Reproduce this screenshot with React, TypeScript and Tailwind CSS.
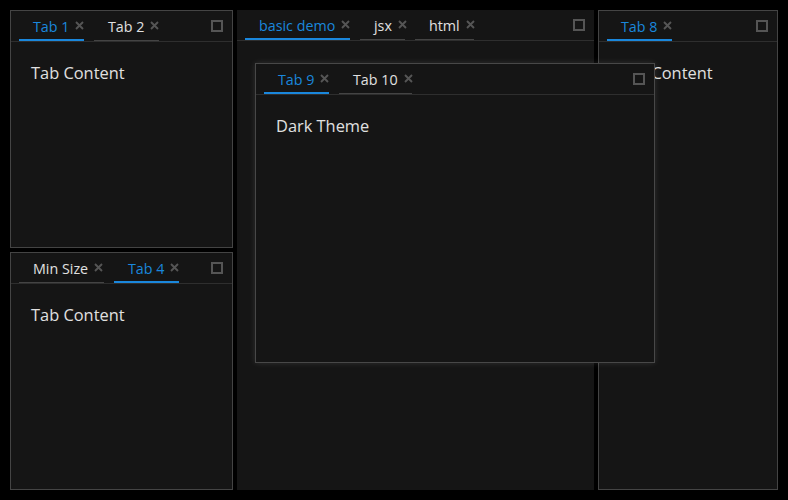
import React from "react";

type Tab = { label: string; w: number; active?: boolean };

function CloseX() {
  return (
    <svg width="9" height="9" viewBox="0 0 9 9" className="shrink-0">
      <path d="M1 1L8 8M8 1L1 8" stroke="#555" strokeWidth="1.9" />
    </svg>
  );
}

function MaxIcon() {
  return <div className="w-[12px] h-[12px] border-2 border-[#555] shrink-0" />;
}

function TabBar({ tabs }: { tabs: Tab[] }) {
  return (
    <div className="flex items-center h-[31px] border-b border-[#2e2e2e] pl-[8px] pr-[9px] shrink-0">
      <div className="flex items-end h-full gap-[10px] flex-1">
        {tabs.map((t) => (
          <div
            key={t.label}
            style={{ width: t.w }}
            className={
              "flex items-center h-full pl-[14px] pr-[1px] gap-[6px] whitespace-nowrap text-[14.3px] " +
              (t.active
                ? "border-b-2 border-[#1a87dc] text-[#1a87dc]"
                : "border-b border-[#444] text-[#e0e0e0] pb-[1px]")
            }
          >
            <span className="pt-[3px]">{t.label}</span>
            <CloseX />
          </div>
        ))}
      </div>
      <MaxIcon />
    </div>
  );
}

function Panel({
  tabs,
  content,
  className,
}: {
  tabs: Tab[];
  content: string;
  className?: string;
}) {
  return (
    <div className={"flex flex-col bg-[#151515] overflow-hidden " + (className ?? "")}>
      <TabBar tabs={tabs} />
      <div className="p-5 text-[16.4px] text-[#e0e0e0] leading-[22px]">{content}</div>
    </div>
  );
}

export default function App() {
  return (
    <div
      className="w-[788px] h-[500px] bg-black p-[10px] flex gap-[4px] relative"
      style={{ fontFamily: '"Open Sans", "Noto Sans", sans-serif' }}
    >
      <div className="w-[223px] flex flex-col gap-[4px]">
        <Panel
          className="h-[238px] border border-[#444]"
          tabs={[
            { label: "Tab 1", w: 65, active: true },
            { label: "Tab 2", w: 65 },
          ]}
          content="Tab Content"
        />
        <Panel
          className="h-[238px] border border-[#444]"
          tabs={[
            { label: "Min Size", w: 85 },
            { label: "Tab 4", w: 65, active: true },
          ]}
          content="Tab Content"
        />
      </div>
      <div className="w-[357px] h-[480px] flex flex-col bg-[#151515]">
        <TabBar
          tabs={[
            { label: "basic demo", w: 105, active: true },
            { label: "jsx", w: 45 },
            { label: "html", w: 59 },
          ]}
        />
      </div>
      <Panel
        className="w-[180px] h-[480px] border border-[#444]"
        tabs={[{ label: "Tab 8", w: 65, active: true }]}
        content="Tab Content"
      />
      <Panel
        className="absolute left-[255px] top-[63px] w-[400px] h-[300px] border border-[#484848] shadow-[0_0_6px_rgba(255,255,255,0.12)]"
        tabs={[
          { label: "Tab 9", w: 65, active: true },
          { label: "Tab 10", w: 73 },
        ]}
        content="Dark Theme"
      />
    </div>
  );
}
